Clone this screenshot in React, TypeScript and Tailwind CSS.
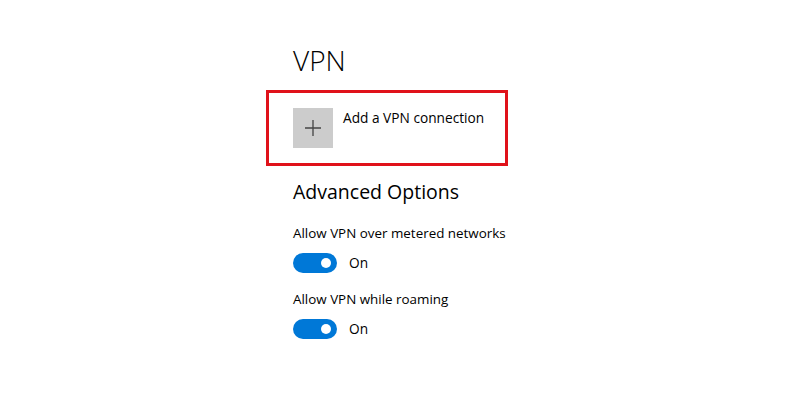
import { type JSX } from "react";

interface ToggleRow {
  label: string;
  state: string;
}

const rows: ToggleRow[] = [
  { label: "Allow VPN over metered networks", state: "On" },
  { label: "Allow VPN while roaming", state: "On" },
];

function Toggle(): JSX.Element {
  return (
    <div className="flex h-5 w-11 items-center justify-end rounded-full bg-[#0078d7] pr-[6px]">
      <div className="h-[10px] w-[10px] rounded-full bg-white" />
    </div>
  );
}

export default function App(): JSX.Element {
  return (
    <div className="min-h-[400px] w-[800px] bg-white font-['Segoe_UI','Open_Sans',sans-serif] text-black">
      <div className="flex flex-col pl-[293px] pt-[42px]">
        <h1 className="text-[28px] font-light leading-9">VPN</h1>

        {/* Add connection, highlighted */}
        <div className="-ml-[27px] mt-[12px] flex h-[76px] w-[242px] gap-[10px] border-[3px] border-[#e0121a] pl-[24px] pt-[15px]">
          <div className="flex h-10 w-10 items-center justify-center bg-[#cccccc]">
            <svg width="18" height="18" viewBox="0 0 18 18" className="text-[#444]">
              <path d="M9 1v16M1 9h16" stroke="currentColor" strokeWidth="1.3" />
            </svg>
          </div>
          <span className="text-[13.7px] leading-5">Add a VPN connection</span>
        </div>

        <h2 className="mt-[12px] text-[19.5px] leading-7">Advanced Options</h2>

        <div className="mt-[17px] flex flex-col gap-[16px]">
          {rows.map((row: ToggleRow) => (
            <div key={row.label} className="flex flex-col gap-[10px]">
              <span className="text-[13.4px] leading-5">{row.label}</span>
              <div className="flex items-center gap-3">
                <Toggle />
                <span className="text-[13.7px] leading-5">{row.state}</span>
              </div>
            </div>
          ))}
        </div>
      </div>
    </div>
  );
}
